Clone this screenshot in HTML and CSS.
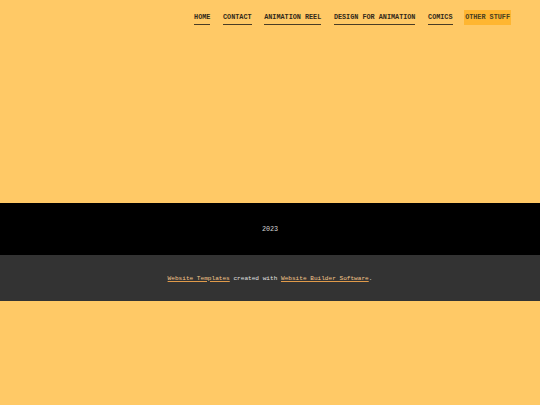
FILE: index.html
```html
<!DOCTYPE html>
<html>
<head>
<meta charset="utf-8">
<link rel="stylesheet" href="styles.css">
</head>
<body>
<header class="header">
  <nav class="nav">
    <a class="nav-link" href="#">HOME</a>
    <a class="nav-link" href="#">CONTACT</a>
    <a class="nav-link" href="#">ANIMATION REEL</a>
    <a class="nav-link" href="#">DESIGN FOR ANIMATION</a>
    <a class="nav-link" href="#">COMICS</a>
    <a class="nav-link active" href="#">OTHER STUFF</a>
  </nav>
</header>
<footer>
  <div class="footer-year">2023</div>
  <div class="footer-credit"><a href="#">Website Templates</a> created with <a href="#">Website Builder Software</a>.</div>
</footer>
</body>
</html>
```
FILE: styles.css
```css
html, body {
  margin: 0;
  padding: 0;
  background: #ffc966;
  font-family: "Liberation Mono", "DejaVu Sans Mono", monospace;
}
.header {
  height: 203px;
  box-sizing: border-box;
  padding: 10px 29px 0 0;
}
.nav {
  display: flex;
  justify-content: flex-end;
  gap: 12.6px;
}
.nav-link {
  display: block;
  font-size: 6.8px;
  font-weight: bold;
  color: #33291a;
  text-decoration: none;
  line-height: 10px;
  padding: 2px 0 2px;
  border-bottom: 1px solid #4a3c24;
}
.nav-link.active {
  background: #ffb631;
  color: #4a4020;
  padding: 2px 1px 2px;
  margin-left: -1px;
  border-bottom: 1px solid #ffb631;
}
.footer-year {
  background: #000;
  color: #d4d4d4;
  height: 52px;
  display: flex;
  align-items: center;
  justify-content: center;
  font-size: 6.75px;
}
.footer-credit {
  background: #333333;
  color: #e0e0e0;
  height: 46px;
  display: flex;
  align-items: center;
  justify-content: center;
  font-size: 6.1px;
  white-space: pre;
}
.footer-credit a {
  color: #f3c58a;
  text-decoration: underline;
  text-decoration-color: #e09a4a;
}
```
